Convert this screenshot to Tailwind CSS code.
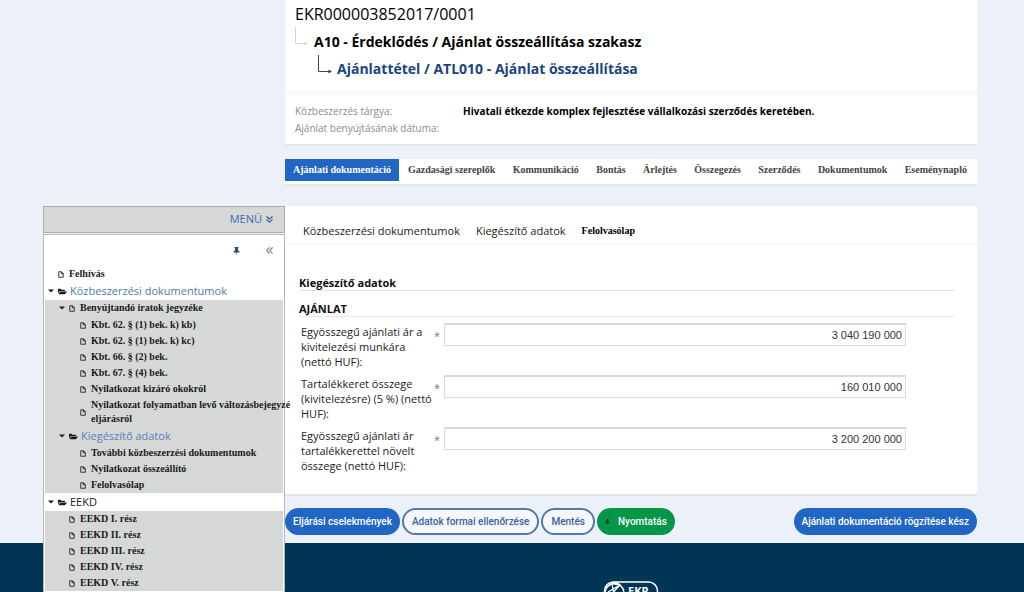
<!DOCTYPE html>
<html lang="hu">
<head>
<meta charset="utf-8">
<meta name="viewport" content="width=device-width, initial-scale=1">
<title>EKR – Ajánlat összeállítása</title>
<script src="https://cdn.jsdelivr.net/npm/@tailwindcss/browser@4"></script>
</head>
<body class="bg-[#ecf1f9] font-['Open_Sans','Noto_Sans',sans-serif] text-[11px] text-[#222]">
<svg class="hidden" aria-hidden="true">
  <symbol id="file" viewBox="0 0 12 14"><path d="M1.500 1.500h5.500l3.500 3.500v7.500h-9zM6.500 1.500v4h4" fill="none" stroke="currentColor" stroke-width="1.700"/></symbol>
  <symbol id="folder" viewBox="0 0 18 14"><path d="M0 11V2.500Q0 1.500 1 1.500h4l1.500 2H13q1 0 1 1V6H5Q3.800 6 3 7zM1 12.500 4 8q.6-1 1.600-1H18l-3.200 4.700q-.6.8-1.600.8z" fill="currentColor"/></symbol>
  <symbol id="caret" viewBox="0 0 10 6"><path d="M0 .5h10L5 5.500z" fill="currentColor"/></symbol>
</svg>
<div class="grid min-h-screen grid-cols-[43px_242px_minmax(0,1fr)_47px] grid-rows-[auto_minmax(49px,1fr)]">

  <footer class="col-span-4 col-start-1 row-start-2 flex justify-center overflow-hidden bg-[#003556] pt-[38px] pl-[238px]">
    <svg class="h-[11px] w-[56px]" viewBox="0 0 56 11" fill="none" stroke="#fff" role="img" aria-label="EKR">
      <rect x="1.500" y="1" width="53" height="20" rx="9" stroke-width="1.500"/>
      <path d="M3 7 9 2.500l8 1.500 4 5M9 2.500l1.500 8.500M17 4l-6.500 7M5 11l12-7M2 11Q4 3 12 1.500 19 3 21 11" stroke-width="1.300"/>
      <text x="25" y="14" font-family="Noto Sans, sans-serif" font-weight="700" font-size="11" fill="#fff" stroke="none">EKR</text>
    </svg>
  </footer>

  <aside class="z-10 col-start-2 row-span-2 row-start-1 flex flex-col pt-[206px]">
    <button type="button" class="flex h-[27px] items-center justify-end gap-1 border border-[#a9adb0] bg-[#d6d8d8] pr-[11px] text-[#4169b4]">MENÜ
      <svg class="size-[7px]" viewBox="0 0 8 8" fill="none" stroke="currentColor" stroke-width="1.500"><path d="m.5.5 3.500 3 3.500-3M.5 4 4 7l3.500-3"/></svg>
    </button>
    <nav aria-label="Dokumentumok" class="mt-px flex-1 border border-b-0 border-[#b4b8ba] bg-white pr-px pl-px">
      <div class="flex h-[31px] items-center justify-end gap-[26px] pr-[10px]">
        <button type="button" aria-label="Rögzítés" class="text-[#28507e]"><svg class="h-2 w-[7px]" viewBox="0 0 7 8" fill="currentColor"><path d="M1.500 0h4v1L5 1.300v2l1.500 1.200V5.500H4L3.500 8 3 5.500H.5V4.500L2 3.300v-2L1.500 1z"/></svg></button>
        <button type="button" aria-label="Összecsukás" class="text-[#65758a]"><svg class="size-[7px]" viewBox="0 0 8 8" fill="none" stroke="currentColor" stroke-width="1.200"><path d="M4 .5.8 4 4 7.500M7.500.5 4.300 4l3.200 3.500"/></svg></button>
      </div>
      <ul class="font-['Liberation_Serif',serif] text-[10px] leading-[14px] font-bold text-[#1a1a1a]">
        <li class="flex h-4 items-center gap-[5px] pl-[13px]"><svg class="h-[7px] w-[6px]"><use href="#file"/></svg><a href="#">Felhívás</a></li>
        <li>
          <div class="flex h-[18px] items-center pl-[3px] font-['Open_Sans','Noto_Sans',sans-serif] text-[11px] font-normal"><svg class="mr-1 h-1 w-[6px]"><use href="#caret"/></svg><svg class="mr-[3px] h-[7px] w-[9px]"><use href="#folder"/></svg><a href="#" class="text-[#5277a8]">Közbeszerzési dokumentumok</a></div>
          <ul class="bg-[#d6d8d8]">
            <li>
              <div class="flex h-4 items-center pl-[14px]"><svg class="mr-1 h-1 w-[6px]"><use href="#caret"/></svg><svg class="mr-[5px] h-[7px] w-[6px]"><use href="#file"/></svg><a href="#">Benyújtandó iratok jegyzéke</a></div>
              <ul class="pt-px">
                <li class="flex h-4 items-center gap-[5px] pl-[35px]"><svg class="h-[7px] w-[6px]"><use href="#file"/></svg><a href="#">Kbt. 62. § (1) bek. k) kb)</a></li>
                <li class="flex h-4 items-center gap-[5px] pl-[35px]"><svg class="h-[7px] w-[6px]"><use href="#file"/></svg><a href="#">Kbt. 62. § (1) bek. k) kc)</a></li>
                <li class="flex h-4 items-center gap-[5px] pl-[35px]"><svg class="h-[7px] w-[6px]"><use href="#file"/></svg><a href="#">Kbt. 66. § (2) bek.</a></li>
                <li class="flex h-4 items-center gap-[5px] pl-[35px]"><svg class="h-[7px] w-[6px]"><use href="#file"/></svg><a href="#">Kbt. 67. § (4) bek.</a></li>
                <li class="flex h-4 items-center gap-[5px] pl-[35px]"><svg class="h-[7px] w-[6px]"><use href="#file"/></svg><a href="#">Nyilatkozat kizáró okokról</a></li>
                <li class="flex h-[30px] items-center gap-[5px] pl-[35px]"><svg class="h-[7px] w-[6px] shrink-0"><use href="#file"/></svg><a href="#" class="whitespace-nowrap">Nyilatkozat folyamatban levő változásbejegyzé<br>eljárásról</a></li>
              </ul>
            </li>
            <li>
              <div class="flex h-[18px] items-center pl-[14px] font-['Open_Sans','Noto_Sans',sans-serif] text-[11px] font-normal"><svg class="mr-1 h-1 w-[6px]"><use href="#caret"/></svg><svg class="mr-[3px] h-[7px] w-[9px]"><use href="#folder"/></svg><a href="#" class="text-[#5b7fc0]">Kiegészítő adatok</a></div>
              <ul>
                <li class="flex h-4 items-center gap-[5px] pl-[35px]"><svg class="h-[7px] w-[6px]"><use href="#file"/></svg><a href="#">További közbeszerzési dokumentumok</a></li>
                <li class="flex h-4 items-center gap-[5px] pl-[35px]"><svg class="h-[7px] w-[6px]"><use href="#file"/></svg><a href="#">Nyilatkozat összeállító</a></li>
                <li class="flex h-4 items-center gap-[5px] pl-[35px]"><svg class="h-[7px] w-[6px]"><use href="#file"/></svg><a href="#">Felolvasólap</a></li>
              </ul>
            </li>
          </ul>
        </li>
        <li>
          <div class="flex h-[18px] items-center pl-[3px] font-['Open_Sans','Noto_Sans',sans-serif] text-[11px] font-normal"><svg class="mr-1 h-1 w-[6px]"><use href="#caret"/></svg><svg class="mr-[3px] h-[7px] w-[9px]"><use href="#folder"/></svg><a href="#">EEKD</a></div>
          <ul class="bg-[#d6d8d8] pb-2">
            <li class="flex h-4 items-center gap-[5px] pl-6"><svg class="h-[7px] w-[6px]"><use href="#file"/></svg><a href="#">EEKD I. rész</a></li>
            <li class="flex h-4 items-center gap-[5px] pl-6"><svg class="h-[7px] w-[6px]"><use href="#file"/></svg><a href="#">EEKD II. rész</a></li>
            <li class="flex h-4 items-center gap-[5px] pl-6"><svg class="h-[7px] w-[6px]"><use href="#file"/></svg><a href="#">EEKD III. rész</a></li>
            <li class="flex h-4 items-center gap-[5px] pl-6"><svg class="h-[7px] w-[6px]"><use href="#file"/></svg><a href="#">EEKD IV. rész</a></li>
            <li class="-mb-2 flex h-4 items-center gap-[5px] pl-6"><svg class="h-[7px] w-[6px]"><use href="#file"/></svg><a href="#">EEKD V. rész</a></li>
          </ul>
        </li>
      </ul>
    </nav>
  </aside>

  <main class="col-start-3 row-start-1">
    <header class="border-b-2 border-[#e2e8ea] bg-white">
      <div class="border-b-4 border-[#fafafb] pt-[3px] pb-[11px] pl-[10px]">
        <p class="text-[16px] leading-[23px] text-black">EKR000003852017/0001</p>
        <h1 class="flex h-[30px] items-center gap-[6px] text-[14px] font-bold text-black"><svg class="mb-2 h-5 w-[13px] text-[#d5d5d5]" viewBox="0 0 13 20" fill="none" stroke="currentColor"><path d="M.5 0v16.500H10"/><path d="M9.500 14.500v4l3.500-2z" fill="currentColor" stroke="none"/></svg>A10 - Érdeklődés / Ajánlat összeállítása szakasz</h1>
        <h2 class="flex h-6 items-center gap-[5px] pl-[23px] text-[14px] font-bold text-[#1a4480]"><svg class="mb-2 h-5 w-[14px] text-[#444]" viewBox="0 0 14 20" fill="none" stroke="currentColor"><path d="M.5 1v16.500H11"/><path d="M10.500 15.500v4l3.500-2z" fill="currentColor" stroke="none"/></svg>Ajánlattétel / ATL010 - Ajánlat összeállítása</h2>
      </div>
      <dl class="grid grid-cols-[168px_1fr] pt-2 pb-[7px] pl-[10px] text-[10px] leading-[17px]">
        <dt class="text-[#8c8c8c]">Közbeszerzés tárgya:</dt><dd class="font-bold text-black">Hivatali étkezde komplex fejlesztése vállalkozási szerződés keretében.</dd>
        <dt class="text-[#8c8c8c]">Ajánlat benyújtásának dátuma:</dt><dd></dd>
      </dl>
    </header>

    <nav aria-label="Eljárás" class="mt-[13px] flex h-[27px] items-start border-b-2 border-[#e4e9ec] bg-white pr-[10px] font-['Liberation_Serif',serif] text-[10px] leading-[22px] font-bold text-[#444]">
      <a href="#" class="bg-[#2266c4] px-2 text-white">Ajánlati dokumentáció</a>
      <div class="flex flex-1 justify-between pl-[9px]">
        <a href="#">Gazdasági szereplők</a>
        <a href="#">Kommunikáció</a>
        <a href="#">Bontás</a>
        <a href="#">Árlejtés</a>
        <a href="#">Összegezés</a>
        <a href="#">Szerződés</a>
        <a href="#">Dokumentumok</a>
        <a href="#">Eseménynapló</a>
      </div>
    </nav>

    <section class="mt-5 border-b-2 border-[#e2e4e6] bg-white pb-[21px]">
      <nav aria-label="Lapok" class="flex h-[39px] items-end gap-4 border-b border-[#f4f4f4] pb-[5px] pl-[18px] leading-4 text-[#222]">
        <a href="#">Közbeszerzési dokumentumok</a>
        <a href="#">Kiegészítő adatok</a>
        <a href="#" class="font-['Liberation_Serif',serif] text-[10px] font-bold text-black">Felolvasólap</a>
      </nav>
      <form id="offer" class="pt-[30px] pr-[23px] pl-[14px]">
        <h3 class="border-b border-[#e2e2e2] text-[11px] leading-[15px] font-bold text-[#111]">Kiegészítő adatok</h3>
        <h4 class="mt-[10px] border-b border-[#e8e8e8] text-[11px] leading-[15px] font-bold text-[#111]">AJÁNLAT</h4>
        <div class="mt-[6px] flex flex-col gap-[6px] pr-[48px] pl-0.5 text-[11px] leading-[15px]">
          <div class="flex items-start"><label for="f1" class="w-[133px] shrink-0 pt-px">Egyösszegű ajánlati ár a<br>kivitelezési munkára<br>(nettó HUF):</label><span class="w-[10px] pt-[5px] text-[#777]">*</span><input id="f1" value="3 040 190 000" class="h-[23px] min-w-0 flex-1 border border-t-2 border-[#dadada] bg-white pr-[3px] text-right font-['Liberation_Sans',sans-serif] text-[11px] text-[#333]"></div>
          <div class="flex items-start"><label for="f2" class="w-[133px] shrink-0 pt-px">Tartalékkeret összege<br>(kivitelezésre) (5 %) (nettó<br>HUF):</label><span class="w-[10px] pt-[5px] text-[#777]">*</span><input id="f2" value="160 010 000" class="h-[23px] min-w-0 flex-1 border border-t-2 border-[#dadada] bg-white pr-[3px] text-right font-['Liberation_Sans',sans-serif] text-[11px] text-[#333]"></div>
          <div class="flex items-start"><label for="f3" class="w-[133px] shrink-0 pt-px">Egyösszegű ajánlati ár<br>tartalékkerettel növelt<br>összege (nettó HUF):</label><span class="w-[10px] pt-[5px] text-[#777]">*</span><input id="f3" value="3 200 200 000" class="h-[23px] min-w-0 flex-1 border border-t-2 border-[#dadada] bg-white pr-[3px] text-right font-['Liberation_Sans',sans-serif] text-[11px] text-[#333]"></div>
        </div>
      </form>
    </section>

    <div class="flex gap-0.5 pt-3 pb-2 font-['Roboto',sans-serif] text-[10px] font-medium">
      <button type="button" class="h-[27px] rounded-full bg-[#2266c4] px-2 text-white">Eljárási cselekmények</button>
      <button type="button" class="h-[27px] rounded-full border-2 border-[#5877a6] bg-[#f4f8fd] px-2 text-[#3c62a0]">Adatok formai ellenőrzése</button>
      <button type="button" class="h-[27px] rounded-full border-2 border-[#5877a6] bg-[#f4f8fd] px-2 text-[#3c62a0]">Mentés</button>
      <button type="button" class="flex h-[27px] items-center gap-2 rounded-full bg-[#059748] px-2 text-white"><svg class="h-[6px] w-[5px] text-[#1b4a2c]" viewBox="0 0 5 6" fill="currentColor"><path d="M1.500 0h2v2.500H5L2.500 6 0 2.500h1.500z"/></svg>Nyomtatás</button>
      <button type="button" class="ml-auto h-[27px] rounded-full bg-[#2266c4] px-2 text-white">Ajánlati dokumentáció rögzítése kész</button>
    </div>
  </main>
</div>
</body>
</html>
